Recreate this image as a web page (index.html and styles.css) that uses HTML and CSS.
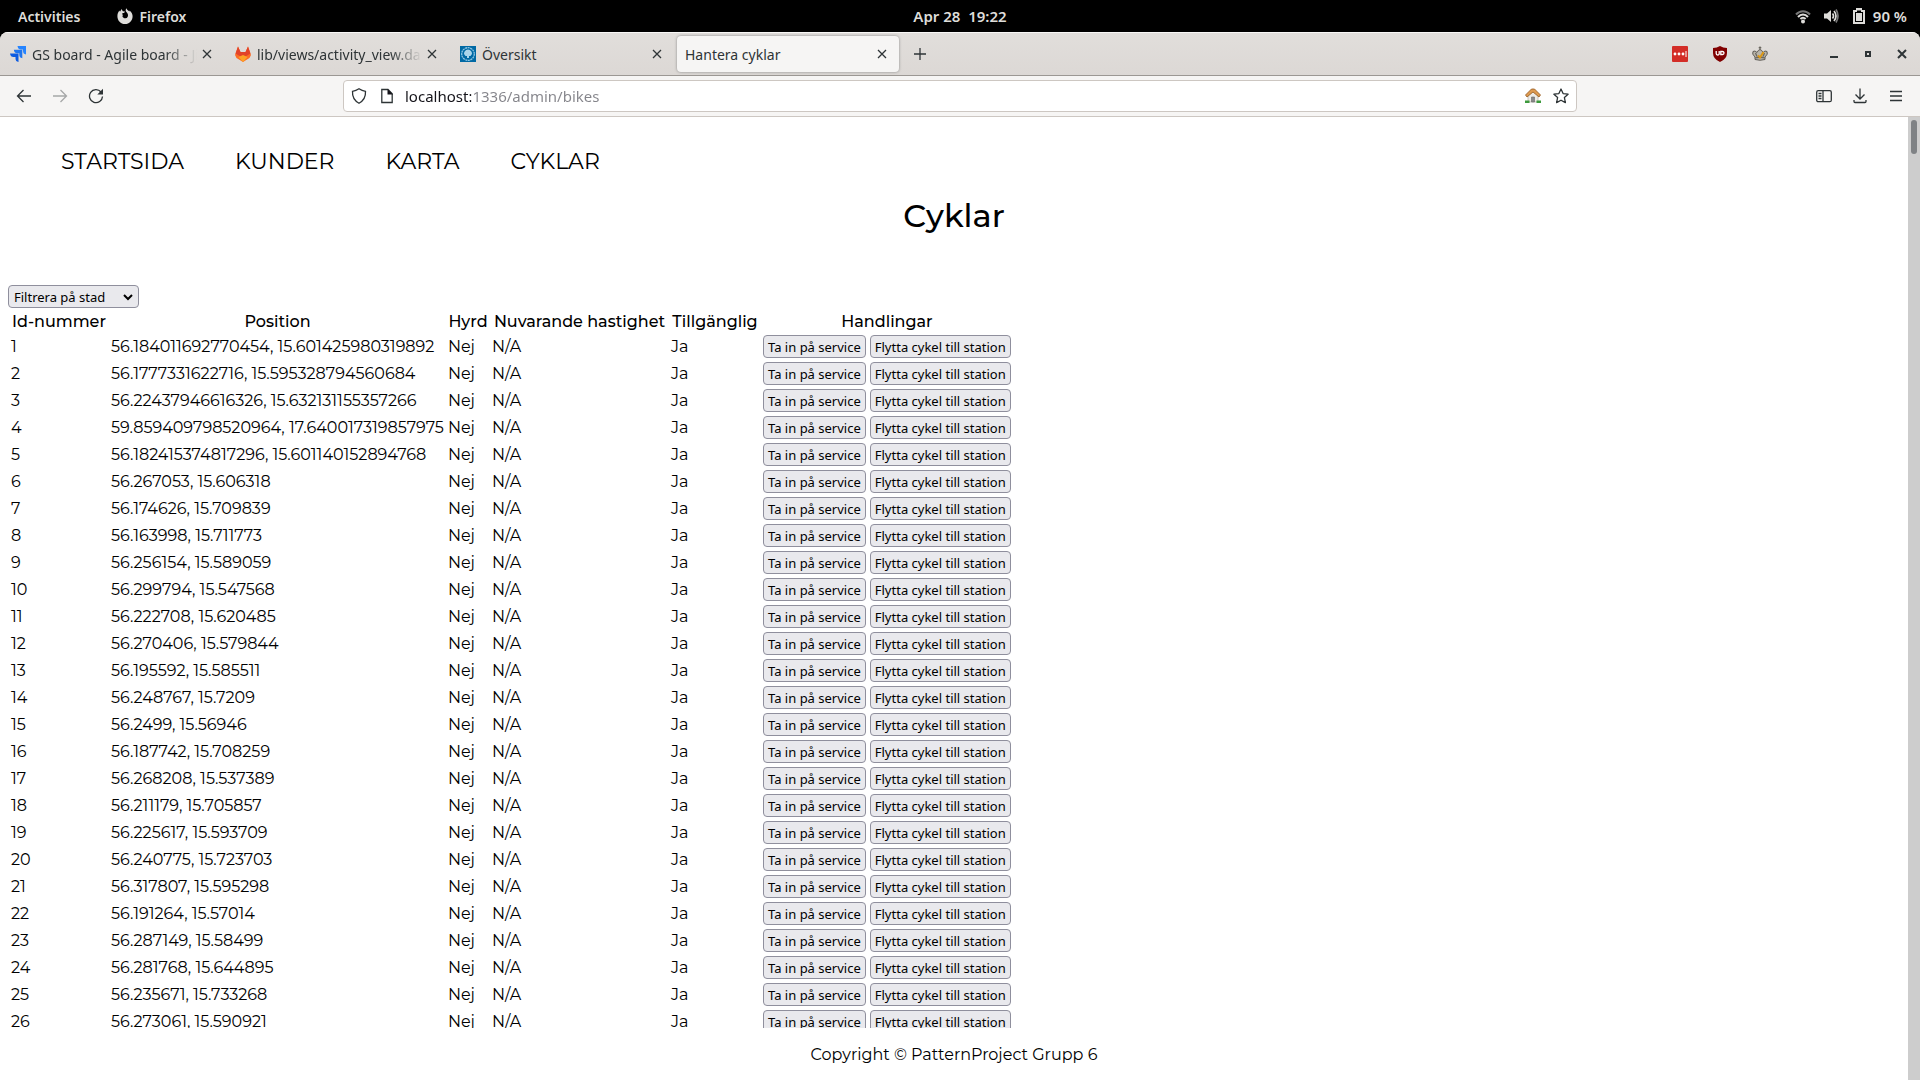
FILE: index.html
```html
<!DOCTYPE html>
<html lang="sv">
<head>
<meta charset="utf-8">
<title>Hantera cyklar</title>
<link rel="stylesheet" href="styles.css">
</head>
<body>
<div class="topbar">
  <div class="top-left">
    <button class="top-button">Activities</button>
    <button class="top-button app-button">
      <svg width="16" height="16" viewBox="0 0 16 16"><path fill="#deddda" d="M2.4 2.6 3 3.8 4.6.9 5.8 3.2 8 3.4 7.1 5H5.7L5 6.2l1 .6-.6 1.4C6 9.8 7.300 10.300 8.500 10.200c1.900-.2 2.900-2 2.400-3.800C10.600 5 9.500 4.300 8.900 3.500 8.500 2.500 8.700 1.200 9.500.3c.3 1.200 1 1.800 2 2.500l.9.8.2-1.200c1.800 1.400 2.900 3.300 3 5.500C15.700 12.500 12.300 16 8 16S.4 12.600.4 8.200c0-2.200.8-4.200 2-5.600z"/></svg>
      Firefox
    </button>
  </div>
  <button class="top-button clock">Apr 28&nbsp; 19:22</button>
  <div class="status">
    <svg width="16" height="16" viewBox="0 0 16 16" fill="none" stroke="#deddda" stroke-width="2"><path stroke="#777" d="M1 6.500C5 2 11 2 15 6.500"/><path d="M3 9C6 5.500 10 5.500 13 9M5.400 11C7 9.300 9 9.300 10.600 11"/><circle cx="8" cy="13.500" r="1" fill="#deddda"/></svg>
    <svg width="16" height="16" viewBox="0 0 16 16" fill="none" stroke="#deddda" stroke-width="1.700"><path fill="#deddda" stroke="none" d="M1 5.500h3L8 2v12l-4-3.500H1z"/><path d="M9.500 5.500q2 2.500 0 5M11 3q4 5 0 10"/><path stroke="#777" d="M13 1.500q4 6.500 0 13"/></svg>
    <span class="battery"><svg width="16" height="16" viewBox="0 0 16 16"><path fill="#deddda" fill-rule="evenodd" d="M5 0h6v2h3v14H2V2h3zM4 4v10h8V4h-2V2.500H6V4z"/><path fill="#deddda" d="M5 5h6v8H5z"/></svg>90 %</span>
  </div>
</div>
<div class="browser">
  <div class="tabbar">
    <div class="tab">
      <svg width="16" height="16" viewBox="0 0 16 16"><path fill="#2684ff" d="M7.500 0H16v8.500Q13 8 13 5V3.500h-2Q8 3.500 7.500 0z"/><path fill="#1f75ee" d="M3.800 3.800h8.500v8.500q-3-.5-3-3.500V7.300h-2q-3 0-3.500-3.500z"/><path fill="#0c5be0" d="M0 7.500h8.500V16q-3-.5-3-3.500V11h-2Q.5 11 0 7.500z"/></svg>
      <span class="tab-title faded">GS board - Agile board - Jira</span>
      <button class="tab-close" aria-label="Stäng flik"><svg width="10" height="10" viewBox="0 0 10 10"><path d="m1 1 8 8M9 1 1 9"/></svg></button>
    </div>
    <div class="tab">
      <svg width="16" height="16" viewBox="0 0 16 16"><path fill="#fc6d26" d="M0 9 3 .5l2.500 5.500h5L13 .500 16 9l-1.500 3L8 16l-6.500-4z"/><path fill="#e24329" d="M3 .5 5.500 6h5L13 .5l2.500 7L8 12 .5 7.500z"/><path fill="#fca326" d="m3.500 11 4.500-2 4.500 2L8 16z"/></svg>
      <span class="tab-title faded">lib/views/activity_view.dart</span>
      <button class="tab-close" aria-label="Stäng flik"><svg width="10" height="10" viewBox="0 0 10 10"><path d="m1 1 8 8M9 1 1 9"/></svg></button>
    </div>
    <div class="tab">
      <svg width="16" height="16" viewBox="0 0 16 16"><path fill="#0069a4" d="M0 0h16v16H0z"/><circle cx="8" cy="8" r="6.300" fill="none" stroke="#8fc6e3" stroke-width="1.300" stroke-dasharray="2 .6"/><path fill="#a9d4ea" d="M4 8q0-4 4-4.500 4 .5 4 4.500l-1.500 2H9v2H7v-2H5.500z"/></svg>
      <span class="tab-title">Översikt</span>
      <button class="tab-close" aria-label="Stäng flik"><svg width="10" height="10" viewBox="0 0 10 10"><path d="m1 1 8 8M9 1 1 9"/></svg></button>
    </div>
    <div class="tab active">
      <span class="tab-title">Hantera cyklar</span>
      <button class="tab-close" aria-label="Stäng flik"><svg width="10" height="10" viewBox="0 0 10 10"><path d="m1 1 8 8M9 1 1 9"/></svg></button>
    </div>
    <button class="icon-button" aria-label="Ny flik"><svg width="12" height="12" viewBox="0 0 12 12"><path d="M6 0v12M0 6h12"/></svg></button>
    <div class="extensions">
      <button class="icon-button" aria-label="LastPass"><svg class="filled" width="16" height="16" viewBox="0 0 16 16"><rect width="16" height="16" rx="1" fill="#d32d27"/><g fill="#fff"><circle cx="3" cy="8" r="1.400"/><circle cx="7" cy="8" r="1.400"/><circle cx="11" cy="8" r="1.400"/><path d="M13.500 5h1v6h-1z"/></g></svg></button>
      <button class="icon-button" aria-label="uBlock Origin"><svg width="16" height="16" viewBox="0 0 16 16"><path fill="#800000" stroke="none" d="M8 0q3 2 7 2v5q0 6-7 9-7-3-7-9V2q4 0 7-2z"/><path stroke="#fff" stroke-width="1.300" d="M4.200 5v2.500q0 1.500 1.500 1.500t1.500-1.500V5M8.800 5.500v3h1.700q1.500 0 1.500-1.500t-1.500-1.500z"/></svg></button>
      <button class="icon-button" aria-label="Kungakrona"><svg width="16" height="16" viewBox="0 0 16 16"><path fill="#b9b5aa" stroke="#5f5c56" stroke-width="1" d="M3 11Q-.5 8 1 5.500 3 4 5 6.500 6 4 8 3.500q2 .5 3 3 2-2.500 4-1 1.500 2.500-2 5.500v2.500q-5 1.500-10 0z"/><path stroke="#6b6861" d="M3.500 7 5 10.500M12.500 7 11 10.500M3 12q5-1.500 10 0M8 .5v3M6.700 1.700h2.600"/><path stroke="#dc9712" stroke-width="2" d="m6 9.500 2 2L11.500 6"/></svg></button>
    </div>
    <div class="window-controls">
      <button class="icon-button" aria-label="Minimera"><svg width="10" height="10" viewBox="0 0 10 10"><path fill="#2e3436" stroke="none" d="M1 7h8v2H1z"/></svg></button>
      <button class="icon-button" aria-label="Maximera"><svg width="10" height="10" viewBox="0 0 10 10"><path stroke-width="2" d="M3 3h4v4H3z"/></svg></button>
      <button class="icon-button" aria-label="Stäng"><svg width="10" height="10" viewBox="0 0 10 10"><path stroke-width="2" d="m1 1 8 8M9 1 1 9"/></svg></button>
    </div>
  </div>
  <div class="toolbar">
    <div class="tools">
      <button class="icon-button" aria-label="Tillbaka"><svg width="16" height="16" viewBox="0 0 16 16"><path d="M15 8H1.500M7.500 2l-6 6 6 6"/></svg></button>
      <button class="icon-button dim" aria-label="Framåt"><svg width="16" height="16" viewBox="0 0 16 16"><path d="M1 8h13.500M8.500 2l6 6-6 6"/></svg></button>
      <button class="icon-button" aria-label="Ladda om"><svg width="16" height="16" viewBox="0 0 16 16"><path d="M13 4A6.500 6.500 0 1 0 14.500 8.500"/><path fill="#2e3436" stroke="none" d="M15 .800V6.500H9.300z"/></svg></button>
    </div>
    <div class="urlbar">
      <svg width="16" height="16" viewBox="0 0 16 16"><path d="M8 .8q3 2 6.500 2.500Q15 11.500 8 15.200 1 11.500 1.500 3.300 5 2.800 8 .8z"/></svg>
      <svg width="16" height="16" viewBox="0 0 16 16"><path d="M2.800 1.500H9L13.200 5.700v8.800H2.800z"/><path fill="#15141a" stroke="none" d="M8.500 1v5.500H14z"/></svg>
      <input class="url" type="text" aria-label="Adress" value="localhost:1336/admin/bikes">
      <svg width="16" height="16" viewBox="0 0 16 16"><path fill="#eeebe6" stroke="#aaa59c" stroke-width=".6" d="M3 8l5-5 5 5v6H3z"/><path fill="#3c9a3c" stroke="none" d="M0 12.500h4.500V15H0zM11.500 12.500H16V15h-4.500z"/><path fill="#8a8a8a" stroke="#666" stroke-width=".6" d="M6.500 9h3v5h-3z"/><path fill="#dd9a50" stroke="#94591f" stroke-width=".8" d="M6.500 1h3l6 6-1.500 2L8 4 2 9 .5 7z"/></svg>
      <svg width="16" height="16" viewBox="0 0 16 16"><path d="m8 1 2.100 4.600 5 .6-3.700 3.400 1 5L8 12.200l-4.400 2.400 1-5L.9 6.200l5-.6z" stroke-linejoin="round"/></svg>
    </div>
    <div class="tools tools-end">
      <button class="icon-button" aria-label="Sidofält"><svg width="16" height="16" viewBox="0 0 16 16"><rect x=".7" y="2.700" width="14.600" height="11" rx="1.500"/><path d="M7 2.700v11M2.500 5.500h3M2.500 8h3M2.500 10.500h3"/></svg></button>
      <button class="icon-button" aria-label="Hämtningar"><svg width="16" height="16" viewBox="0 0 16 16"><path d="M8 .5v10.500M3.500 6.500 8 11l4.500-4.500M2 12v1.500q0 1 1 1h10q1 0 1-1V12"/></svg></button>
      <button class="icon-button" aria-label="Meny"><svg width="16" height="16" viewBox="0 0 16 16"><path d="M2 3.500h12M2 8h12M2 12.500h12"/></svg></button>
    </div>
  </div>
  <div class="viewport">
    <div class="page">
      <nav class="nav">
        <a href="#">STARTSIDA</a>
        <a href="#">KUNDER</a>
        <a href="#">KARTA</a>
        <a href="#">CYKLAR</a>
      </nav>
      <h1 class="title">Cyklar</h1>
      <main class="main">
        <div class="filter">
          <select class="city" aria-label="Filtrera på stad"><option>Filtrera på stad</option></select>
          <svg class="chevron" width="10" height="10" viewBox="0 0 10 10"><path d="m1 3 4 4 4-4"/></svg>
        </div>
        <table class="bikes">
          <colgroup><col class="c-id"><col class="c-pos"><col class="c-rent"><col class="c-speed"><col class="c-free"><col class="c-act"></colgroup>
          <thead><tr><th>Id-nummer</th><th>Position</th><th>Hyrd</th><th>Nuvarande hastighet</th><th>Tillgänglig</th><th>Handlingar</th></tr></thead>
          <tbody>
            <tr><td>1</td><td>56.184011692770454, 15.601425980319892</td><td>Nej</td><td>N/A</td><td>Ja</td><td><button>Ta in på service</button><button>Flytta cykel till station</button></td></tr>
            <tr><td>2</td><td>56.1777331622716, 15.595328794560684</td><td>Nej</td><td>N/A</td><td>Ja</td><td><button>Ta in på service</button><button>Flytta cykel till station</button></td></tr>
            <tr><td>3</td><td>56.22437946616326, 15.632131155357266</td><td>Nej</td><td>N/A</td><td>Ja</td><td><button>Ta in på service</button><button>Flytta cykel till station</button></td></tr>
            <tr><td>4</td><td>59.859409798520964, 17.640017319857975</td><td>Nej</td><td>N/A</td><td>Ja</td><td><button>Ta in på service</button><button>Flytta cykel till station</button></td></tr>
            <tr><td>5</td><td>56.182415374817296, 15.601140152894768</td><td>Nej</td><td>N/A</td><td>Ja</td><td><button>Ta in på service</button><button>Flytta cykel till station</button></td></tr>
            <tr><td>6</td><td>56.267053, 15.606318</td><td>Nej</td><td>N/A</td><td>Ja</td><td><button>Ta in på service</button><button>Flytta cykel till station</button></td></tr>
            <tr><td>7</td><td>56.174626, 15.709839</td><td>Nej</td><td>N/A</td><td>Ja</td><td><button>Ta in på service</button><button>Flytta cykel till station</button></td></tr>
            <tr><td>8</td><td>56.163998, 15.711773</td><td>Nej</td><td>N/A</td><td>Ja</td><td><button>Ta in på service</button><button>Flytta cykel till station</button></td></tr>
            <tr><td>9</td><td>56.256154, 15.589059</td><td>Nej</td><td>N/A</td><td>Ja</td><td><button>Ta in på service</button><button>Flytta cykel till station</button></td></tr>
            <tr><td>10</td><td>56.299794, 15.547568</td><td>Nej</td><td>N/A</td><td>Ja</td><td><button>Ta in på service</button><button>Flytta cykel till station</button></td></tr>
            <tr><td>11</td><td>56.222708, 15.620485</td><td>Nej</td><td>N/A</td><td>Ja</td><td><button>Ta in på service</button><button>Flytta cykel till station</button></td></tr>
            <tr><td>12</td><td>56.270406, 15.579844</td><td>Nej</td><td>N/A</td><td>Ja</td><td><button>Ta in på service</button><button>Flytta cykel till station</button></td></tr>
            <tr><td>13</td><td>56.195592, 15.585511</td><td>Nej</td><td>N/A</td><td>Ja</td><td><button>Ta in på service</button><button>Flytta cykel till station</button></td></tr>
            <tr><td>14</td><td>56.248767, 15.7209</td><td>Nej</td><td>N/A</td><td>Ja</td><td><button>Ta in på service</button><button>Flytta cykel till station</button></td></tr>
            <tr><td>15</td><td>56.2499, 15.56946</td><td>Nej</td><td>N/A</td><td>Ja</td><td><button>Ta in på service</button><button>Flytta cykel till station</button></td></tr>
            <tr><td>16</td><td>56.187742, 15.708259</td><td>Nej</td><td>N/A</td><td>Ja</td><td><button>Ta in på service</button><button>Flytta cykel till station</button></td></tr>
            <tr><td>17</td><td>56.268208, 15.537389</td><td>Nej</td><td>N/A</td><td>Ja</td><td><button>Ta in på service</button><button>Flytta cykel till station</button></td></tr>
            <tr><td>18</td><td>56.211179, 15.705857</td><td>Nej</td><td>N/A</td><td>Ja</td><td><button>Ta in på service</button><button>Flytta cykel till station</button></td></tr>
            <tr><td>19</td><td>56.225617, 15.593709</td><td>Nej</td><td>N/A</td><td>Ja</td><td><button>Ta in på service</button><button>Flytta cykel till station</button></td></tr>
            <tr><td>20</td><td>56.240775, 15.723703</td><td>Nej</td><td>N/A</td><td>Ja</td><td><button>Ta in på service</button><button>Flytta cykel till station</button></td></tr>
            <tr><td>21</td><td>56.317807, 15.595298</td><td>Nej</td><td>N/A</td><td>Ja</td><td><button>Ta in på service</button><button>Flytta cykel till station</button></td></tr>
            <tr><td>22</td><td>56.191264, 15.57014</td><td>Nej</td><td>N/A</td><td>Ja</td><td><button>Ta in på service</button><button>Flytta cykel till station</button></td></tr>
            <tr><td>23</td><td>56.287149, 15.58499</td><td>Nej</td><td>N/A</td><td>Ja</td><td><button>Ta in på service</button><button>Flytta cykel till station</button></td></tr>
            <tr><td>24</td><td>56.281768, 15.644895</td><td>Nej</td><td>N/A</td><td>Ja</td><td><button>Ta in på service</button><button>Flytta cykel till station</button></td></tr>
            <tr><td>25</td><td>56.235671, 15.733268</td><td>Nej</td><td>N/A</td><td>Ja</td><td><button>Ta in på service</button><button>Flytta cykel till station</button></td></tr>
            <tr><td>26</td><td>56.273061, 15.590921</td><td>Nej</td><td>N/A</td><td>Ja</td><td><button>Ta in på service</button><button>Flytta cykel till station</button></td></tr>
          </tbody>
        </table>
      </main>
      <footer class="footer">Copyright © PatternProject Grupp 6</footer>
    </div>
    <div class="scrollbar"><div class="thumb"></div></div>
  </div>
</div>
</body>
</html>
```
FILE: styles.css
```css
* { box-sizing: border-box; }

body {
  margin: 0;
  height: 100vh;
  display: flex;
  flex-direction: column;
  overflow: hidden;
  background: #000;
  font-family: "Noto Sans", sans-serif;
  font-size: 14px;
  color: #2e3436;
}

button {
  margin: 0;
  padding: 0;
  border: 0;
  background: none;
  font: inherit;
  color: inherit;
}

svg { display: block; flex: none; }

/* desktop panel */
.topbar {
  flex: none;
  display: grid;
  grid-template-columns: 1fr auto 1fr;
  align-items: center;
  height: 32px;
  padding: 0 13px;
  color: #deddda;
  font-weight: 600;
}
.top-left { display: flex; gap: 37px; padding-left: 5px; }
.app-button { display: flex; align-items: center; gap: 6px; }
.status { display: flex; justify-content: flex-end; align-items: center; gap: 12px; }
.battery { display: flex; align-items: center; gap: 6px; }
.clock, .battery { font-size: 15px; }

/* browser frame */
.browser {
  flex: 1;
  min-height: 0;
  display: flex;
  flex-direction: column;
  border-radius: 8px 8px 0 0;
  background: #f6f5f4;
  overflow: hidden;
}
.tabbar {
  flex: none;
  display: flex;
  align-items: center;
  height: 44px;
  padding-right: 4px;
  border-top: 1px solid #f8f7f6;
  border-bottom: 1px solid #9b9793;
  background: linear-gradient(#e1dedb, #dcd8d5);
}
.tab {
  display: flex;
  align-items: center;
  gap: 6px;
  width: 225px;
  height: 36px;
  padding: 0 8px 0 10px;
}
.tab.active {
  width: 222px;
  margin: 0 7px 0 2px;
  padding: 0 7px 0 8px;
  border-radius: 4px;
  background: #f6f5f4;
  box-shadow: 0 0 3px #888;
}
.tab-title { flex: 1; min-width: 0; overflow: hidden; white-space: nowrap; }
.tab-title.faded {
  -webkit-mask-image: linear-gradient(to left, transparent, #000 32px);
  mask-image: linear-gradient(to left, transparent, #000 32px);
}
.tab .tab-close { width: 20px; height: 20px; margin-left: -6px; display: grid; place-items: center; }
.tab-close svg, .icon-button svg, .urlbar svg {
  fill: none;
  stroke: #2e3436;
  stroke-width: 1.3;
}
.icon-button { display: grid; place-items: center; width: 28px; height: 28px; }
.icon-button .filled { stroke: none; }
.extensions { display: flex; gap: 12px; margin-left: auto; }
.window-controls { display: flex; gap: 6px; margin-left: 46px; }

.toolbar {
  flex: none;
  display: flex;
  justify-content: space-between;
  align-items: center;
  height: 41px;
  padding: 0 10px;
  border-bottom: 1px solid #cdc7c2;
}
.tools { flex: 1; display: flex; gap: 8px; }
.tools-end { justify-content: flex-end; }
.dim { opacity: .4; }
.urlbar {
  display: flex;
  align-items: center;
  gap: 12px;
  width: 1234px;
  height: 32px;
  padding: 0 7px;
  border: 1px solid #cdc7c2;
  border-radius: 4px;
  background: #fff;
}
.url {
  flex: 1;
  min-width: 0;
  padding: 0;
  border: 0;
  margin-left: -2px;
  font: inherit;
  font-size: 15px;
  color: transparent;
  background: linear-gradient(90deg, #15141a 66px, #84848a 66px);
  -webkit-background-clip: text;
  background-clip: text;
}

/* web page */
.viewport { flex: 1; min-height: 0; display: flex; background: #fff; }
.page {
  flex: 1;
  display: flex;
  flex-direction: column;
  font-family: Montserrat, Inter, sans-serif;
  font-size: 16px;
  color: #000;
}
.scrollbar { width: 12px; padding: 3px; background: #cdcdcd; }
.thumb { height: 34px; border-radius: 3px; background: #7f8285; }
.nav { display: flex; gap: 51px; padding: 29px 61px 0; font-size: 22px; line-height: 32px; }
.nav a { color: inherit; text-decoration: none; }
.title { margin: 16px 0 47px; font-size: 32px; line-height: 44px; font-weight: 500; text-align: center; }
.main { flex: 1; min-height: 0; overflow: hidden; padding: 0 8px; }
.filter { display: grid; justify-content: start; align-items: center; }
.filter > * { grid-area: 1 / 1; }
.city {
  width: 131px;
  height: 23px;
  padding: 0 5px;
  appearance: none;
}
.chevron { justify-self: end; margin-right: 6px; fill: none; stroke: #000; stroke-width: 2; pointer-events: none; }
.city, .bikes button {
  border: 1px solid #8f8f9d;
  border-radius: 4px;
  background: #e9e9ed;
  font: 13px "Noto Sans", sans-serif;
  color: #000;
}
.bikes { table-layout: fixed; width: 1006px; border-spacing: 2px; }
.bikes th, .bikes td { padding: 0 1px; white-space: nowrap; line-height: 23px; }
.bikes th { padding-top: 1px; font-weight: 500; height: 22px; line-height: 21px; }
.bikes td { height: 25px; text-align: left; }
.c-id { width: 98px; }
.c-pos { width: 335px; }
.c-rent { width: 42px; }
.c-speed { width: 177px; }
.c-free { width: 90px; }
.bikes td:last-child { display: flex; gap: 4px; align-items: center; }
.bikes button { height: 23px; padding: 0 4px; }
.footer { flex: none; height: 52px; line-height: 54px; text-align: center; }
```
